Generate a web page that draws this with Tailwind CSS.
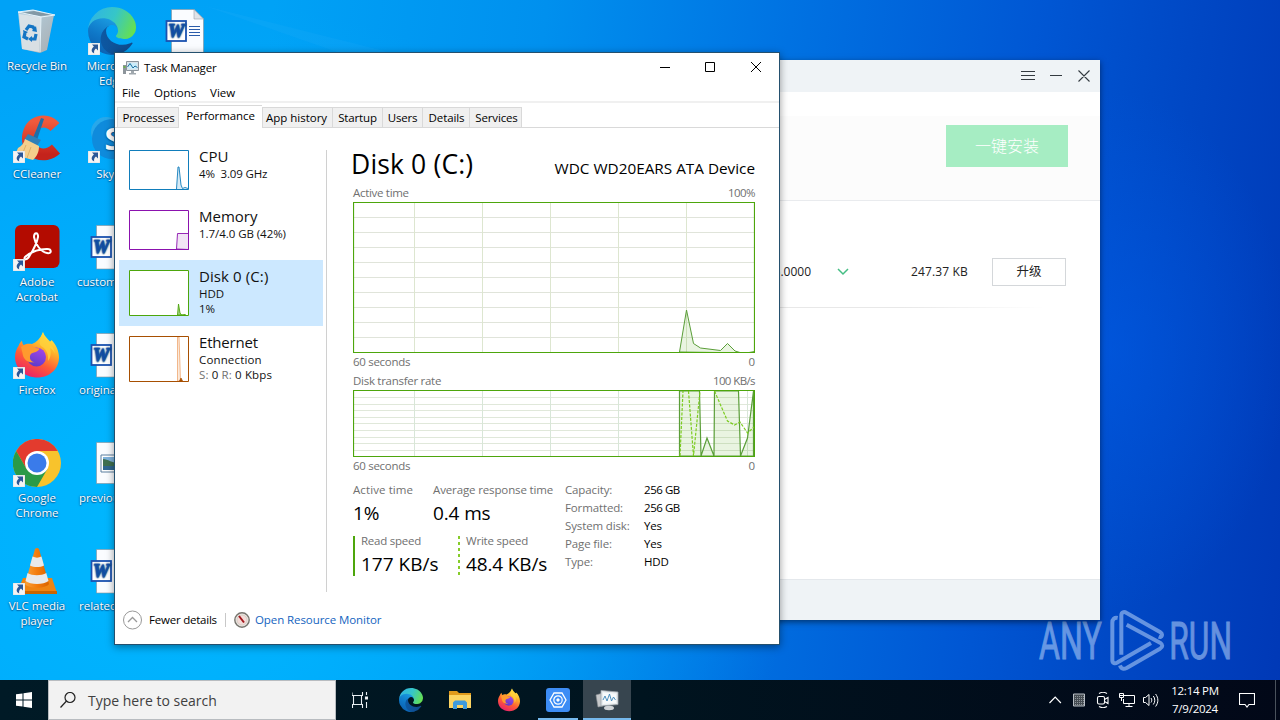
<!DOCTYPE html>
<html lang="en">
<head>
    <meta charset="UTF-8">
    <meta name="viewport" content="width=device-width, initial-scale=1.0">
    <title>Task Manager</title>

    <!-- Tailwind css -->
    <script src="https://cdn.jsdelivr.net/npm/@tailwindcss/browser@4"></script>
</head>

<body class="relative flex flex-col w-[1280px] h-[720px] overflow-hidden font-['Open_Sans','Noto_Sans_CJK_SC',sans-serif] text-[11.5px] text-black bg-[linear-gradient(97deg,#00a2f7_0%,#00a2f6_20%,#0090ee_40%,#0072e2_58%,#0057d4_76%,#0047c4_88%,#0038b6_100%)]">

    <!-- shared icons -->
    <svg class="absolute size-0">
        <defs>
            <linearGradient id="edgeA" x1="0" y1="0" x2="1" y2="0"><stop offset="0" stop-color="#0c59a4"/><stop offset="1" stop-color="#114a8b"/></linearGradient>
            <linearGradient id="edgeB" x1="0.6" y1="0" x2="0.2" y2="1"><stop offset="0" stop-color="#1b9de2"/><stop offset="0.5" stop-color="#0f78c8"/><stop offset="1" stop-color="#0a5cad"/></linearGradient>
            <linearGradient id="edgeC" x1="0" y1="0.3" x2="1" y2="0.6"><stop offset="0" stop-color="#2fb4e4"/><stop offset="0.5" stop-color="#36c6c8"/><stop offset="1" stop-color="#66e04f"/></linearGradient>
            <linearGradient id="ffA" x1="0.8" y1="0" x2="0.3" y2="1"><stop offset="0" stop-color="#fff44f"/><stop offset="0.35" stop-color="#ffb02a"/><stop offset="0.65" stop-color="#ff5a36"/><stop offset="1" stop-color="#e8206c"/></linearGradient>
            <linearGradient id="ffB" x1="0.7" y1="0" x2="0.3" y2="1"><stop offset="0" stop-color="#a545e8"/><stop offset="1" stop-color="#5b3bc8"/></linearGradient>
            <linearGradient id="bin" x1="0" y1="0" x2="1" y2="1"><stop offset="0" stop-color="#b4d3e4"/><stop offset="1" stop-color="#a9aeb2"/></linearGradient>
            <linearGradient id="ccl" x1="0" y1="0" x2="0" y2="1"><stop offset="0" stop-color="#ef5a3c"/><stop offset="1" stop-color="#c4231c"/></linearGradient>
            <linearGradient id="cone" x1="0" y1="0" x2="1" y2="0"><stop offset="0" stop-color="#f9a13a"/><stop offset="0.5" stop-color="#f47c0c"/><stop offset="1" stop-color="#d96400"/></linearGradient>
        </defs>
        <symbol id="icon-edge" viewBox="0 0 256 256">
            <path fill="url(#edgeA)" d="M231 190.500c-3.400 1.800-6.900 3.400-10.500 4.700a101 101 0 0 1-35.800 6.500c-47.300 0-88.400-32.500-88.400-74.200a31.400 31.400 0 0 1 16.400-27.300c-42.800 1.800-53.800 46.400-53.800 72.500 0 74 68.100 81.400 82.800 81.400 7.900 0 19.800-2.300 27-4.600l1.300-.4a128.300 128.300 0 0 0 66.600-52.800 4 4 0 0 0-5.600-5.700z"/>
            <path fill="url(#edgeB)" d="M105.700 241.400a79.200 79.200 0 0 1-22.700-21.300 80.700 80.700 0 0 1 29.500-120c3.200-1.500 8.500-4.100 15.600-4a32.400 32.400 0 0 1 25.700 13 31.900 31.900 0 0 1 6.300 18.700c0-.2 24.500-79.600-80-79.600-43.900 0-80 41.700-80 78.200a130.200 130.200 0 0 0 12.100 56 128 128 0 0 0 156.400 67 75.500 75.500 0 0 1-62.800-8z"/>
            <path fill="url(#edgeC)" d="M152.300 148.900c-.8 1-3.300 2.500-3.300 5.700 0 2.600 1.700 5.100 4.700 7.200 14.400 10 41.500 8.700 41.600 8.700a59.600 59.600 0 0 0 30.300-8.300 61.400 61.400 0 0 0 30.400-52.900c.3-22.400-8-37.300-11.300-43.900C223.500 23.900 177.700 0 128 0A128 128 0 0 0 0 126.200c.5-36.500 36.800-66 80-66 3.500 0 23.500.3 42 10a72.600 72.600 0 0 1 30.900 29.300c6.100 10.600 7.200 24.100 7.200 29.500s-2.700 13.300-7.800 19.900z"/>
        </symbol>
        <symbol id="icon-firefox" viewBox="0 0 48 48">
            <path fill="url(#ffA)" d="M30 1c1.500 4.500 4.500 6.500 7 9.500 1-.5 1.500-1 1.500-1.500 4.500 4.500 7.500 11 7.500 17.500C46 38 36.500 46.500 24.500 46.500S2 38 2 26c0-5 2-9 3.500-11 .5-2 2-4 3.500-5.500.2 2 .8 3.500 1.500 4.500 3-1.500 6-1.500 8.500-1 4-1.500 8.500-5.500 11-12z"/>
            <circle cx="23.500" cy="26" r="9.500" fill="url(#ffB)"/>
            <path fill="#ff9a2e" d="M8 16c4-3 9-3 12-.5 1.500 1.500 4 1.800 6.500 2-.5 2-3 3.500-5.500 4-2 .5-3.500 1-4 3.500-.5 4 2 6 5 6-6 1.500-12-2-12.500-9z"/>
            <path fill="#ffd23c" opacity="0.800" d="M30 1c0 8 11 11 12 22-1-3-3-5-5-6 1.500 5 .5 10-2 13 1-8-3-13-7-15-3-3 0-9 2-14z"/>
        </symbol>
        <symbol id="icon-word" viewBox="0 0 48 48">
            <path fill="#fafcff" stroke="#8a9099" stroke-width="0.600" d="M8.500 2.500H31l9.500 9.500v34h-32z"/>
            <path fill="#dfe3e8" stroke="#9aa0a8" stroke-width="0.600" d="M31 2.500V12h9.500z"/>
            <path stroke="#2a5caa" stroke-width="1" d="M26 19.500h11M26 22.500h11M26 25.500h11M26 28.500h11"/>
            <rect x="3.500" y="14" width="19.500" height="20" fill="#fff" stroke="#1a52b0" stroke-width="1.800"/>
            <text x="13.200" y="30" text-anchor="middle" textLength="16.500" lengthAdjust="spacingAndGlyphs" font-family="Liberation Serif" font-size="18" font-weight="bold" font-style="italic" fill="#1a52b0" stroke="#1a52b0" stroke-width="0.600">W</text>
        </symbol>
        <symbol id="icon-shortcut" viewBox="0 0 12 12">
            <path fill="#f4f4f4" stroke="#c8ccd0" stroke-width="0.500" d="M0 0h12v12H0z"/>
            <path fill="#2b5797" d="M4 1.500h6v6L8 5.600C6.200 7 5.800 8.600 6.200 10.500 3 9 2.800 6 5.900 3.500z"/>
        </symbol>
    </svg>

    <!-- Desktop -->
    <main class="relative flex-1">

        <!-- Wallpaper light -->
        <div class="absolute inset-0 bg-[radial-gradient(ellipse_620px_520px_at_180px_520px,#00b8ff_0%,#00b4ffcc_35%,#00a8ff00_100%),radial-gradient(ellipse_180px_260px_at_1110px_350px,#005ce888_0%,#005ce800_100%)]"></div>
        <svg class="absolute inset-0 h-[60px] w-[640px]" viewBox="0 0 640 60" fill="#5cc4ff">
            <path opacity="0.080" d="M205 6 420 60H360z"/>
        </svg>

        <!-- Desktop icons -->
        <div class="relative grid w-[224px] grid-flow-col grid-cols-[74px_74px_74px] grid-rows-[repeat(6,108px)] gap-x-px pt-[7px] text-center leading-[15px] text-white [text-shadow:0_0_2px_#00467f,0_1px_1px_#00467f99]">
            <div class="flex flex-col items-center gap-[3px]">
                <svg class="size-12" viewBox="0 0 48 48">
                    <path fill="url(#bin)" d="m5 5 4 37 18 4 7-3 7-35-21-5z"/>
                    <path fill="#dfe5e9" opacity="0.850" d="m6 7 22 3-2 35L9 42z"/>
                    <path fill="#6e8492" opacity="0.700" d="m7 6 14-2 18 4-12 1z"/>
                    <path fill="none" stroke="#e6f3fa" stroke-width="1" d="m5 5 15-2 22 5-14 2zM28 10l-1 35"/>
                    <path fill="none" stroke="#1475c4" stroke-width="3.200" d="m13 23 3-4 4 1 2 3M23 27l-1 5h-4M15 32l-4-2 1-4"/>
                    <path fill="#1475c4" d="m23 19 1 6-5-1zM19 29v6l-4-3zM10 23l5 2-4 3z"/>
                </svg>
                <span>Recycle Bin</span>
            </div>
            <div class="flex flex-col items-center gap-[3px]">
                <div class="relative size-12">
                    <svg class="size-12" viewBox="0 0 48 48">
                        <path fill="none" stroke="url(#ccl)" stroke-width="12" d="M42 12C33 2 17 6 15 22c-1 16 16 23 28 12"/>
                        <path fill="#1e6ea8" d="m28 3 3 1-7 21-4-2z"/>
                        <path fill="#2f80b8" d="m15 19 13 6-4 6-13-6z"/>
                        <path fill="#f4cf8c" d="m12 24 14 7c0 6-2 10-6 14L2 40l3-7c4-2 6-5 7-9z"/>
                        <path stroke="#d9a85a" stroke-width="0.800" d="m13 30-4 10M18 32l-4 11"/>
                    </svg>
                    <svg class="absolute bottom-0 left-0 size-3"><use href="#icon-shortcut"/></svg>
                </div>
                <span>CCleaner</span>
            </div>
            <div class="flex flex-col items-center gap-[3px]">
                <div class="relative size-12">
                    <svg class="size-12" viewBox="0 0 48 48">
                        <rect x="2" y="2" width="44.500" height="43" rx="6" fill="#b30b00"/>
                        <path fill="none" stroke="#fff" stroke-width="2" stroke-linejoin="round" d="M12 34c-2 3 2 4 5-2 4-6 7-13 8-18 .5-5-4-5-4 0 1 7 7 15 13 16 5 1 5-4 0-4-7 0-15 2-22 8z"/>
                    </svg>
                    <svg class="absolute bottom-0 left-0 size-3"><use href="#icon-shortcut"/></svg>
                </div>
                <span>Adobe<br>Acrobat</span>
            </div>
            <div class="flex flex-col items-center gap-[3px]">
                <div class="relative size-12">
                    <svg class="size-12"><use href="#icon-firefox"/></svg>
                    <svg class="absolute bottom-0 left-0 size-3"><use href="#icon-shortcut"/></svg>
                </div>
                <span>Firefox</span>
            </div>
            <div class="flex flex-col items-center gap-[3px]">
                <div class="relative size-12">
                    <svg class="size-12" viewBox="0 0 48 48">
                        <circle cx="24" cy="24" r="24" fill="#f8c32c"/>
                        <path fill="#e33b2e" d="M3.200 12A24 24 0 0 1 44.800 12H24L13.600 30z"/>
                        <path fill="#2a9a48" d="M3.200 12A24 24 0 0 0 24 48l10.400-18L24 24l-10.400 6z"/>
                        <circle cx="24" cy="24" r="12" fill="#fff"/>
                        <circle cx="24" cy="24" r="9.500" fill="#3a7bea"/>
                    </svg>
                    <svg class="absolute bottom-0 left-0 size-3"><use href="#icon-shortcut"/></svg>
                </div>
                <span>Google<br>Chrome</span>
            </div>
            <div class="flex flex-col items-center gap-[3px]">
                <div class="relative size-12">
                    <svg class="size-12" viewBox="0 0 48 48">
                        <path fill="#ef8412" d="M10 31h29l5 15H4z"/>
                        <path fill="#c96500" d="M4 44h40v3H4z"/>
                        <path fill="url(#cone)" d="M22 2c1-1.500 3-1.500 4 0l10 35c-4 5-20 5-24 0z"/>
                        <path fill="#e9e9e9" d="m19.500 9.500-2.500 9c4 2 10 2 14 0l-2.500-9c-3 1.500-6 1.500-9 0zM14.500 26 12.500 34c5 4 18 4 23 0l-2.200-8c-5 3-14 3-18.800 0z"/>
                    </svg>
                    <svg class="absolute bottom-0 left-0 size-3"><use href="#icon-shortcut"/></svg>
                </div>
                <span>VLC media<br>player</span>
            </div>

            <div class="flex flex-col items-center gap-[3px]">
                <div class="relative size-12">
                    <svg class="size-12"><use href="#icon-edge"/></svg>
                    <svg class="absolute bottom-0 left-0 size-3"><use href="#icon-shortcut"/></svg>
                </div>
                <span>Microsoft<br>Edge</span>
            </div>
            <div class="flex flex-col items-center gap-[3px]">
                <div class="relative size-12">
                    <svg class="size-12" viewBox="0 0 48 48">
                        <circle cx="18" cy="17" r="15" fill="#28a8ea"/>
                        <circle cx="24" cy="24" r="20" fill="#0f8bdc"/>
                        <text x="25" y="35" text-anchor="middle" font-family="Open Sans" font-size="31" font-weight="bold" fill="#fff">S</text>
                    </svg>
                    <svg class="absolute bottom-0 left-0 size-3"><use href="#icon-shortcut"/></svg>
                </div>
                <span>Skype</span>
            </div>
            <div class="flex flex-col items-center gap-[3px]">
                <svg class="size-12"><use href="#icon-word"/></svg>
                <span class="w-full pl-[2px] text-left">customers</span>
            </div>
            <div class="flex flex-col items-center gap-[3px]">
                <svg class="size-12"><use href="#icon-word"/></svg>
                <span class="w-full pl-1 text-left">originally</span>
            </div>
            <div class="flex flex-col items-center gap-[3px]">
                <svg class="size-12" viewBox="0 0 48 48">
                    <path fill="#fafcff" stroke="#8a9099" stroke-width="0.600" d="M8.500 3.500H41v41H8.500z"/>
                    <path fill="#fff" stroke="#5a7fa0" stroke-width="1" d="M13 16h24v17H13z"/>
                    <path fill="#7fb2dc" d="M15 18h20v6H15z"/>
                    <path fill="#3f7050" d="M15 20c5 0 8 4 20 5v3H15z"/>
                    <path fill="#2f6790" d="M15 27h20v4H15z"/>
                </svg>
                <span class="w-full pl-1 text-left">previous</span>
            </div>
            <div class="flex flex-col items-center gap-[3px]">
                <svg class="size-12"><use href="#icon-word"/></svg>
                <span class="w-full pl-1 text-left">related</span>
            </div>

            <div class="flex flex-col items-center">
                <svg class="-ml-px size-12"><use href="#icon-word"/></svg>
            </div>
        </div>

        <!-- Watermark -->
        <svg class="absolute left-[1035px] top-[605px] h-[70px] w-[210px]" viewBox="45 45 630 210" opacity="0.600">
            <g fill="#a9c8f5" stroke="#a9c8f5" stroke-width="3" font-family="Roboto" font-size="155">
                <text x="57" y="207" textLength="188" lengthAdjust="spacingAndGlyphs">ANY</text>
                <text x="448" y="207" textLength="188" lengthAdjust="spacingAndGlyphs">RUN</text>
            </g>
            <g fill="none" stroke="#a9c8f5" stroke-width="12" stroke-linejoin="round">
                <path d="M293 84c-10-2-16 4-16 14v112c0 10 8 12 16 7l100-58"/>
                <path d="M304 194V76c0-10 8-12 16-7l100 57c10 6 6 18-4 14"/>
                <path d="M300 226c4 12 12 12 20 8l100-58c9-6 9-12 0-18l-100-54"/>
            </g>
        </svg>

        <!-- Installer window -->
        <section class="absolute left-[690px] top-[60px] flex h-[560px] w-[410px] flex-col bg-white text-[#222] shadow-[0_2px_6px_#00000080]">
            <div class="flex h-8 items-center justify-end bg-[#eff3f6] pr-[9px]">
                <svg class="h-4 w-[70px]" viewBox="0 0 70 16" fill="none" stroke="#333a40" stroke-width="1.100">
                    <path d="M0 3.500h14M0 7.500h14M0 11.500h14M29 7.500h12M57.500 2.500l11 11M68.500 2.500l-11 11"/>
                </svg>
            </div>
            <div class="mt-6 flex h-[85px] items-start justify-end border-b border-[#e9ebee] bg-[#fcfcfc] pr-8 pt-[9px]">
                <button class="h-[42px] w-[122px] bg-[#a6edc3] text-base font-light text-white">一键安装</button>
            </div>
            <div class="mt-[37px] flex h-[68px] items-center pr-[34px] text-xs">
                <span class="w-[121px] text-right">15.0000</span>
                <svg class="ml-[26px] size-3" viewBox="0 0 12 12" fill="none" stroke="#45be84" stroke-width="1.500"><path d="m1 3 5 5 5-5"/></svg>
                <span class="ml-auto mr-6 tracking-[0.150px]">247.37 KB</span>
                <button class="h-7 w-[74px] border border-[#d4d7da] text-[12.500px]">升级</button>
            </div>
            <div class="mr-14 mt-[1px] h-px bg-linear-to-r from-[#e8e8e8] from-60% to-white"></div>
            <div class="mt-auto h-[41px] border-t border-[#e4e8ec] bg-[#eff3f6]"></div>
        </section>

        <!-- Task Manager window -->
        <section class="absolute left-[114px] top-[52px] flex h-[593px] w-[666px] flex-col border border-[#24506e] bg-white shadow-[0_2px_8px_#00000066]">

            <!-- Title bar -->
            <div class="flex h-[30px] items-center pl-2">
                <svg class="size-4" viewBox="0 0 16 16">
                    <path fill="#8d959b" d="M0 5h3v9H0z"/><path fill="#6ab04c" d="M0.500 6h2v2h-2z"/>
                    <path fill="#d9e2e8" stroke="#8a949c" d="M3.500 1.500h12v9h-12z"/>
                    <path fill="#c9ecfa" d="M5 3h9v6H5z"/>
                    <path fill="none" stroke="#1c6e9e" d="m4.500 7 2.500-3.500L10 8l2-2 2.500 1.500"/>
                    <path fill="#a0a8ae" d="M8 11h3v2h2v1.500H6V13h2z"/>
                </svg>
                <span class="ml-[5px] tracking-[-0.200px]">Task Manager</span>
                <svg class="ml-auto mr-[17px] mt-[-2px] h-3 w-[102px]" viewBox="0 0 102 12" fill="none" stroke="#000" stroke-width="1">
                    <path d="M0 6.500h10M45.500 1.500h9v9h-9zM91 1l10 10M101 1l-10 10"/>
                </svg>
            </div>

            <!-- Menu -->
            <div class="flex h-5 items-center gap-[14px] border-b-2 border-[#f0f0f0] pl-[7px] pt-px leading-none tracking-[-0.050px]">
                <span>File</span>
                <span>Options</span>
                <span>View</span>
            </div>

            <!-- Tabs -->
            <div class="flex h-[25px] items-end border-b border-[#d9d9d9] pl-[2px] text-center leading-[19px]">
                <div class="h-5 w-[62px] border border-b-0 border-[#d9d9d9] bg-[#f0f0f0] pl-px tracking-[-0.150px]">Processes</div>
                <div class="-mb-px h-[23px] w-[83px] border-t border-[#d9d9d9] bg-white tracking-[-0.100px]">Performance</div>
                <div class="h-5 w-[71px] border border-b-0 border-[#d9d9d9] bg-[#f0f0f0] pr-[2px]">App history</div>
                <div class="h-5 w-[50px] border-r border-t border-[#d9d9d9] bg-[#f0f0f0] tracking-[-0.150px]">Startup</div>
                <div class="h-5 w-10 border-r border-t border-[#d9d9d9] bg-[#f0f0f0] tracking-[-0.200px]">Users</div>
                <div class="h-5 w-[47px] border-r border-t border-[#d9d9d9] bg-[#f0f0f0] pl-px tracking-[-0.100px]">Details</div>
                <div class="h-5 w-[52px] border-r border-t border-[#d9d9d9] bg-[#f0f0f0] pl-[2px] tracking-[-0.150px]">Services</div>
            </div>

            <div class="flex h-[464px]">

                <!-- Resource list -->
                <div class="w-[208px] pl-1 pt-3 leading-[15px] text-[#111]">
                    <div class="flex h-[60px] gap-[10px] pl-[10px] pt-[10px]">
                        <svg class="h-10 w-[60px] bg-white" viewBox="0 0 60 40" fill="none" stroke="#117dbb">
                            <path fill="#d6eaf6" stroke-width="0.900" d="m47.500 39 1.500-22h1l2 18 1.500 3.500 2.500-1 3 1"/>
                            <path d="M0.500 0.500h59v39h-59z"/>
                        </svg>
                        <div class="-mt-1">
                            <div class="text-[15px] leading-5">CPU</div>
                            <div class="tracking-[-0.150px]">4%&nbsp; 3.09 GHz</div>
                        </div>
                    </div>
                    <div class="flex h-[60px] gap-[10px] pl-[10px] pt-[10px]">
                        <svg class="h-10 w-[60px] bg-white" viewBox="0 0 60 40" fill="none" stroke="#8b12ae">
                            <path fill="#f1e4f5" stroke-width="0.900" d="m47.500 39 1-15.500h11v16z"/>
                            <path d="M0.500 0.500h59v39h-59z"/>
                        </svg>
                        <div class="-mt-1">
                            <div class="text-[15px] leading-5">Memory</div>
                            <div class="tracking-[-0.050px]">1.7/4.0 GB (42%)</div>
                        </div>
                    </div>
                    <div class="flex h-[66px] gap-[10px] bg-[#cce8ff] pl-[10px] pt-[10px]">
                        <svg class="h-[46px] w-[60px] bg-white" viewBox="0 0 60 46" fill="none" stroke="#4da60c">
                            <path fill="#a6d286" stroke-width="0.900" d="m48.500 45 1-11 1.500 9 1.500 2h2l1-1 1 1z"/>
                            <path d="M0.500 0.500h59v45h-59z"/>
                        </svg>
                        <div class="-mt-1">
                            <div class="text-[15px] leading-5 tracking-[0.100px]">Disk 0 (C:)</div>
                            <div>HDD<br>1%</div>
                        </div>
                    </div>
                    <div class="flex h-[66px] gap-[10px] pl-[10px] pt-[10px]">
                        <svg class="h-[46px] w-[60px] bg-white" viewBox="0 0 60 46" fill="none" stroke="#a74f01">
                            <path fill="#fbeadb" stroke="#f0b080" stroke-width="0.900" d="M48.500 45V1h1.500l1.500 44z"/>
                            <path fill="#a74f01" stroke-width="0.700" d="m50.500 45 1.500-3 1.500 3z"/>
                            <path d="M0.500 0.500h59v45h-59z"/>
                        </svg>
                        <div class="-mt-1">
                            <div class="text-[15px] leading-5 tracking-[-0.200px]">Ethernet</div>
                            <div class="tracking-[0.150px]">Connection</div>
                            <div class="tracking-[0.130px]"><span class="text-[#707070]">S:</span> 0 <span class="text-[#707070]">R:</span> 0 Kbps</div>
                        </div>
                    </div>
                </div>
                <div class="ml-[3px] mt-[22px] h-[442px] w-px bg-[#d0d0d0]"></div>

                <!-- Disk details -->
                <div class="ml-[26px] w-[402px] pt-[18px] leading-[18px] tracking-[-0.200px] text-[#707070]">
                    <div class="flex h-[38px] items-baseline justify-between tracking-normal text-black">
                        <h1 class="-ml-[2px] text-[26.500px] leading-[37px] tracking-[0.150px]">Disk 0 (C:)</h1>
                        <span class="text-[15.300px]">WDC WD20EARS ATA Device</span>
                    </div>
                    <div class="flex justify-between"><span class="tracking-[-0.300px]">Active time</span><span class="tracking-[-0.550px]">100%</span></div>
                    <svg class="h-[151px] w-[402px]" viewBox="0 0 402 151" fill="none" stroke="#4da60c">
                        <path stroke="#e0e4da" d="M1 15.500h400M1 30.500h400M1 45.500h400M1 60.500h400M1 75.500h400M1 90.500h400M1 105.500h400M1 120.500h400M1 135.500h400"/>
                        <path stroke="#dde6d0" d="M61.500 1v149M129.500 1v149M197.500 1v149M265.500 1v149M333.500 1v149"/>
                        <path fill="#4da60c" fill-opacity="0.120" stroke="#5a9e38" d="m326.500 150 7-42 7 33.500 7 4.500 20 2.500 7-7 7.500 7.500 5 1.500h9l5.500-1v1.500z"/>
                        <path stroke-width="1.200" d="M0.500 0.500h401v150H0.500z"/>
                    </svg>
                    <div class="flex justify-between"><span class="tracking-[-0.300px]">60 seconds</span><span>0</span></div>
                    <div class="flex justify-between pt-px"><span class="tracking-[-0.280px]">Disk transfer rate</span><span class="tracking-[-0.600px]">100 KB/s</span></div>
                    <svg class="h-[67px] w-[402px]" viewBox="0 0 402 67" fill="none" stroke="#4da60c">
                        <path stroke="#e0e8da" d="M1 7.500h400M1 14.500h400M1 20.500h400M1 27.500h400M1 33.500h400M1 40.500h400M1 47.500h400M1 53.500h400M1 60.500h400"/>
                        <path stroke="#d8e6d8" d="M61.500 1v65M129.500 1v65M197.500 1v65M265.500 1v65M394.500 1v65"/>
                        <path fill="#4da60c" fill-opacity="0.120" stroke="#5a9e38" stroke-width="1.200" d="M326.500 66V1h20l1.500 65 6-18 7 18L361.500 1h24l2 65 7-18 6-47v65z"/>
                        <path stroke="#7ccc20" stroke-width="1.200" stroke-dasharray="3 1.500" d="m327 66 3-65M335.500 1l5 65 6.500-65M361.500 1l13 30 7 4 5.500-3 7.500 11 6.500-6"/>
                        <path stroke-width="1.200" d="M0.500 0.500h401v66H0.500z"/>
                    </svg>
                    <div class="flex justify-between"><span class="tracking-[-0.300px]">60 seconds</span><span>0</span></div>

                    <!-- Disk numbers -->
                    <div class="mt-[6px] flex tracking-[-0.130px]">
                        <div class="w-[212px]">
                            <div class="flex">
                                <div class="w-20">
                                    <div class="tracking-[0.100px]">Active time</div>
                                    <div class="text-[19px] leading-7 text-black">1%</div>
                                </div>
                                <div class="whitespace-nowrap">
                                    <div>Average response time</div>
                                    <div class="text-[19px] leading-7 text-black">0.4 ms</div>
                                </div>
                            </div>
                            <div class="mt-[9px] flex">
                                <div class="h-10 w-[105px] border-l-2 border-[#4da60c] pl-[6px]">
                                    <div class="-mt-1 tracking-[-0.250px]">Read speed</div>
                                    <div class="whitespace-nowrap text-[19px] leading-7 tracking-normal text-black">177 KB/s</div>
                                </div>
                                <div class="h-10 w-[2px] bg-[repeating-linear-gradient(180deg,#86cc2a_0_3px,transparent_3px_6px)]"></div>
                                <div class="pl-[6px]">
                                    <div class="-mt-1 tracking-[-0.200px]">Write speed</div>
                                    <div class="whitespace-nowrap text-[19px] leading-7 text-black">48.4 KB/s</div>
                                </div>
                            </div>
                        </div>
                        <div class="w-[79px]">Capacity:<br>Formatted:<br>System disk:<br>Page file:<br>Type:</div>
                        <div class="tracking-[-0.450px] text-black">256 GB<br>256 GB<br><span class="tracking-[-0.200px]">Yes<br>Yes<br>HDD</span></div>
                    </div>
                </div>
            </div>

            <!-- Footer -->
            <div class="flex flex-1 items-center pl-[7px] pt-[3px]">
                <svg class="size-5" viewBox="0 0 20 20" fill="none" stroke="#999"><circle cx="10.500" cy="10" r="9"/><path stroke-width="1.300" d="m6 12 4.500-4.500 4.500 4.500"/></svg>
                <span class="ml-[7px] w-[76px] tracking-[-0.220px]">Fewer details</span>
                <div class="h-[14px] w-px bg-[#c8c8c8]"></div>
                <svg class="ml-2 size-4" viewBox="0 0 16 16">
                    <circle cx="8" cy="8" r="7.200" fill="#e9e6e0" stroke="#77756f" stroke-width="1.400"/>
                    <circle cx="8" cy="8" r="5" fill="#f3dcd8" stroke="#c9c0b8" stroke-width="0.600"/>
                    <path stroke="#a3161c" stroke-width="2" d="m5 4 5 6.500"/>
                </svg>
                <span class="ml-[5px] tracking-[-0.080px] text-[#1464c0]">Open Resource Monitor</span>
            </div>
        </section>
    </main>

    <!-- Taskbar -->
    <footer class="relative flex h-10 items-center bg-linear-to-r from-[#001a26] via-[#00141f] to-[#020818] text-white">
        <div class="flex w-12 justify-center">
            <svg class="size-4" viewBox="0 0 16 16" fill="#fff"><path d="M0 2.300 6.500 1.400v6.100H0zM7.500 1.200 16 0v7.500H7.500zM0 8.500h6.500v6.100L0 13.700zM7.500 8.500H16V16l-8.500-1.200z"/></svg>
        </div>
        <div class="flex h-10 w-[288px] items-center border border-[#b8bcc0] bg-[#f2f2f2] pl-[11px] text-[#404040]">
            <svg class="size-4" viewBox="0 0 16 16" fill="none" stroke="#222" stroke-width="1.200"><circle cx="10" cy="5.500" r="5"/><path d="M6.500 9 .5 15.500"/></svg>
            <span class="ml-3 pt-px text-sm">Type here to search</span>
        </div>
        <div class="flex h-10 w-12 items-center justify-center">
            <svg class="size-4" viewBox="0 0 16 16" fill="none" stroke="#e8eef2" stroke-width="1.100"><path d="M0 3.500h11M0 12.500h11M1.500 3.500v9M9.500 3.500v9M0 .5V3M10.500 0v3M.5 13v3M10.500 13v3M14.500 0v3M14.500 10v6"/><path fill="#fff" d="M13.500 5h2v2h-2z"/></svg>
        </div>
        <div class="ml-[3px] flex h-10 w-12 items-center justify-center">
            <svg class="size-6"><use href="#icon-edge"/></svg>
        </div>
        <div class="ml-px flex h-10 w-12 items-center justify-center">
            <svg class="h-5 w-[22px]" viewBox="0 0 22 20">
                <path fill="#e09a1c" d="M0 1h8l2 2h12v4H0z"/>
                <path fill="#fcd462" d="M0 5h22v13H0z"/>
                <path fill="#3f9bdc" d="M4 19v-6.500l2-2h10l2 2V19h-4v-4H8v4z"/>
            </svg>
        </div>
        <div class="ml-px flex h-10 w-12 items-center justify-center">
            <svg class="size-6"><use href="#icon-firefox"/></svg>
        </div>
        <div class="ml-[5px] flex h-10 w-10 items-center justify-center border-b-2 border-[#76b9ed] pt-[2px]">
            <svg class="size-6" viewBox="0 0 24 24" fill="none" stroke="#fff">
                <rect width="24" height="24" rx="3" fill="#3d8df5" stroke="none"/>
                <path stroke-width="1.300" d="M8 5h8l4 7-4 7H8l-4-7z"/>
                <circle cx="12" cy="12" r="4.200" stroke-width="1.200"/>
                <circle cx="12" cy="12" r="1.200" fill="#fff"/>
            </svg>
        </div>
        <div class="ml-[5px] flex h-10 w-12 items-center justify-center border-b-2 border-[#76b9ed] bg-[#37454f] pt-[2px]">
            <svg class="h-[22px] w-6" viewBox="0 0 24 22">
                <path fill="#c6c8ca" stroke="#8f9498" stroke-width="0.600" d="m1 6 7-2v13l-5 1z"/>
                <path fill="#e8ecee" stroke="#9aa2a8" stroke-width="0.800" d="M6 1.500 23 3v12.500L6 17z"/>
                <path fill="#f7fafb" d="M8 3.500 21 4.700v9.300L8 15z"/>
                <path fill="none" stroke="#3c85b8" stroke-width="0.900" d="m8 11 2-4 2 5 2.500-7 2 7 2-4 2 3"/>
                <ellipse cx="14" cy="19" rx="5" ry="2.200" fill="#cfd3d6"/>
            </svg>
        </div>

        <!-- Tray -->
        <div class="ml-auto flex items-center gap-2">
            <svg class="size-4" viewBox="0 0 16 16" fill="none" stroke="#fff" stroke-width="1.200"><path d="m2.500 11 5.700-6 5.700 6"/></svg>
            <svg class="size-4" viewBox="0 0 16 16" stroke="#b8bec4"><path fill="#454c52" d="M2.500 2h11v12h-11z"/><path stroke="#8e959a" stroke-dasharray="1 1" d="M4 4.500h9M4 6.500h9M4 8.500h9M4 10.500h9M4 12.500h9"/></svg>
            <svg class="size-4" viewBox="0 0 16 16" fill="none" stroke="#fff" stroke-width="1.100"><rect x="2.500" y="4.500" width="7" height="7.500" rx="1.500"/><path d="m9.500 7.500 3.500-2v6l-3.500-2M4 1.500c2.500-1.500 5.500-1.500 8 0M4 14.500c2.500 1.500 5.500 1.500 8 0"/></svg>
            <svg class="size-4" viewBox="0 0 16 16" fill="none" stroke="#fff"><path d="M5 3.500h10.500v8H4.500V7M10 11.500v3M6.500 14.500h7M.5 1.500h4v4h-4zM2.500 5.500V9M1 3.500h3"/></svg>
            <svg class="size-4" viewBox="0 0 16 16" fill="none" stroke="#fff"><path d="M.5 5.500h2l3.500-3v11l-3.500-3h-2zM8 6c1 1.500 1 3 0 4.500M10.300 4c2 2.500 2 6 0 8.500M12.600 2c3 4 3 8.500 0 12.500"/></svg>
        </div>
        <div class="w-[72px] text-center leading-[18px] tracking-[-0.250px]">12:14 PM<br>7/9/2024</div>
        <svg class="ml-2 mr-5 size-4" viewBox="0 0 16 16" fill="none" stroke="#fff" stroke-width="1.100"><path d="M.5 1.500h15v11h-5.500l-2 2.500-2-2.500H.5z"/></svg>
        <div class="mr-1 h-10 w-px bg-[#4a525c]"></div>
    </footer>
</body>
</html>
